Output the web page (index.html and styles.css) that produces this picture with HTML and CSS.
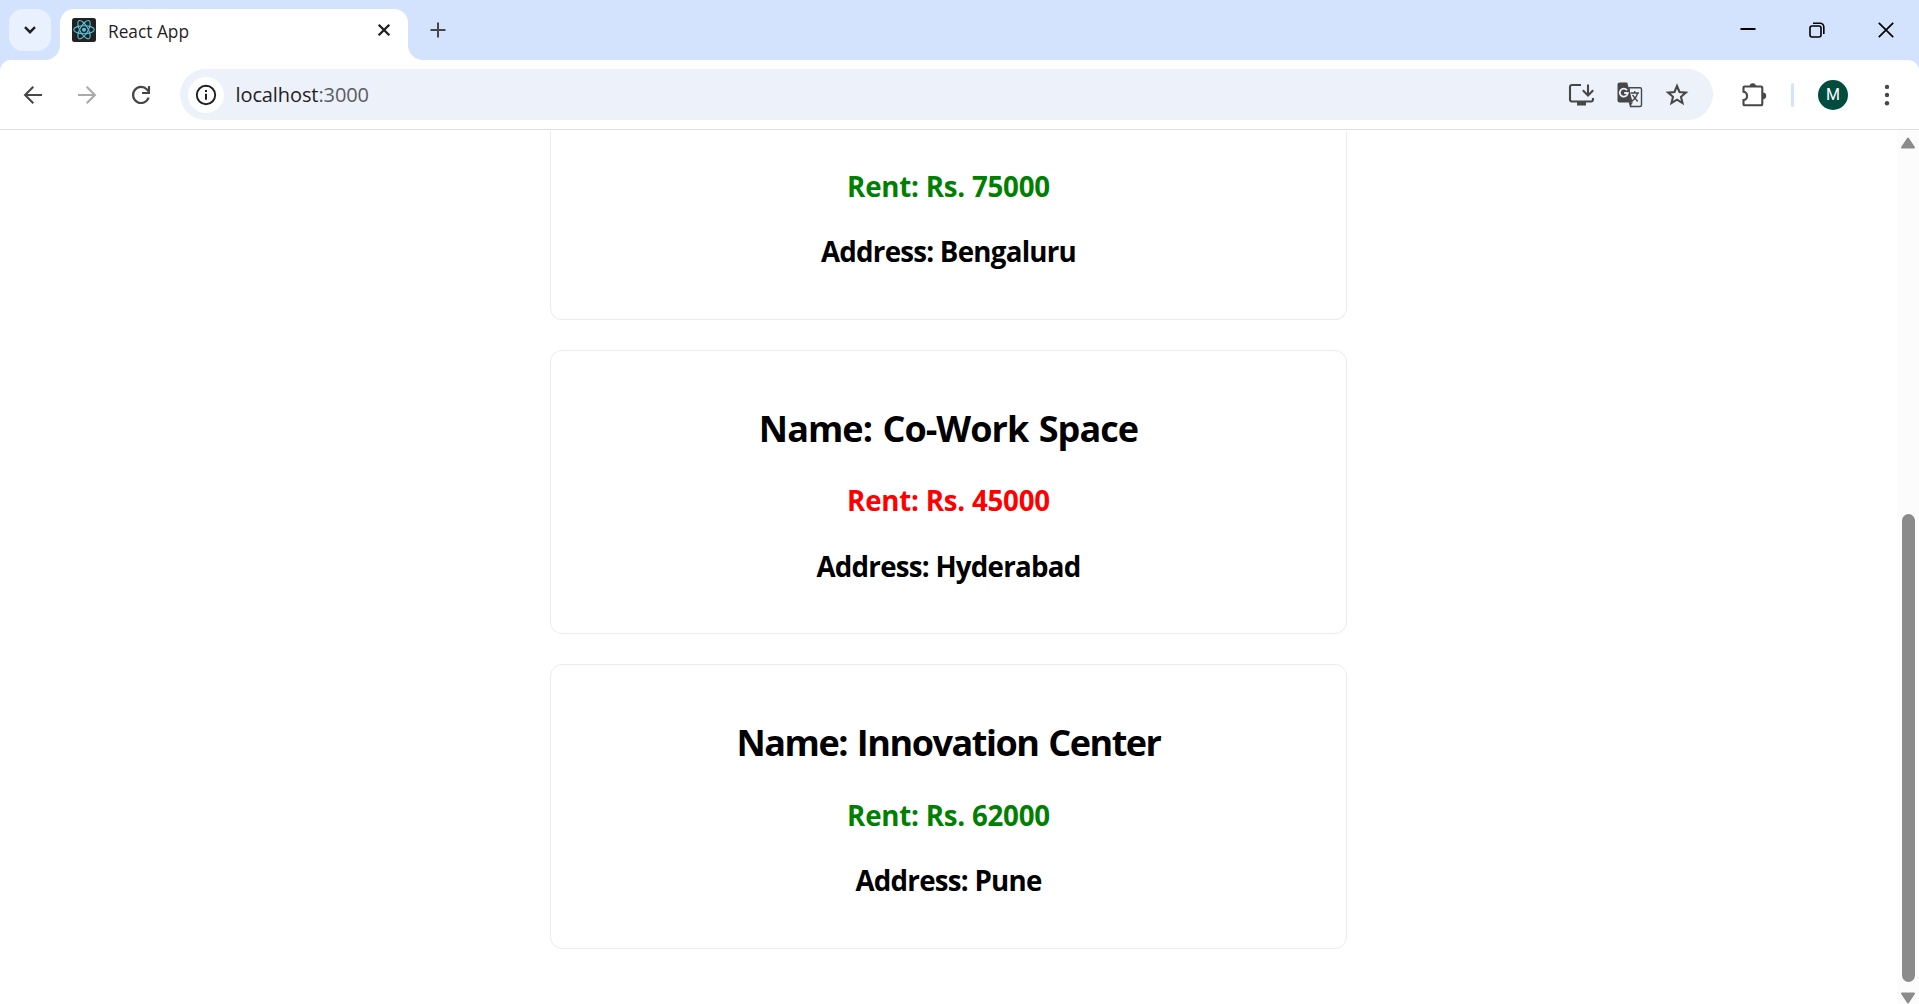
FILE: index.html
```
<!DOCTYPE html>
<html lang="en">
<head>
<meta charset="utf-8">
<title>React App</title>
<link rel="stylesheet" href="styles.css">
</head>
<body>
<div class="browser">
  <header class="tabstrip">
    <button class="tab-search" aria-label="Search tabs">
      <svg width="14" height="10" viewBox="0 0 14 10"><path d="M2 2.2l5 5 5-5" fill="none" stroke="#1f1f1f" stroke-width="2.4"/></svg>
    </button>
    <div class="tab">
      <svg class="favicon" width="24" height="24" viewBox="0 0 24 24">
        <rect width="24" height="24" rx="2.5" fill="#222"/>
        <g fill="none" stroke="#58c4dc" stroke-width="1.1">
          <ellipse cx="12" cy="11.7" rx="10.3" ry="4"/>
          <ellipse cx="12" cy="11.7" rx="10.3" ry="4" transform="rotate(60 12 11.7)"/>
          <ellipse cx="12" cy="11.7" rx="10.3" ry="4" transform="rotate(120 12 11.7)"/>
        </g>
        <circle cx="12" cy="11.7" r="2" fill="#58c4dc"/>
      </svg>
      <span class="tab-title">React App</span>
      <svg class="tab-close" width="14" height="14" viewBox="0 0 14 14"><path d="M1.7 1.7l10.6 10.6M12.3 1.7L1.7 12.3" stroke="#1f1f1f" stroke-width="2.3"/></svg>
    </div>
    <svg class="new-tab" width="16" height="16" viewBox="0 0 16 16"><path d="M8 .5v15M.5 8h15" stroke="#474747" stroke-width="2"/></svg>
    <div class="window-controls">
      <svg width="16" height="16" viewBox="0 0 16 16"><path d="M.5 7h15" stroke="#000" stroke-width="2"/></svg>
      <svg width="16" height="16" viewBox="0 0 16 16" fill="none" stroke="#000" stroke-width="1.6"><rect x="1" y="4" width="11" height="11" rx="2"/><path d="M4 1.2h7.2a3.6 3.6 0 0 1 3.6 3.6V12"/></svg>
      <svg width="16" height="16" viewBox="0 0 16 16"><path d="M.8.8l14.4 14.4M15.2.8L.8 15.2" stroke="#000" stroke-width="1.7"/></svg>
    </div>
  </header>

  <div class="toolbar-back">
    <nav class="toolbar">
      <svg class="nav-icon" width="20" height="20" viewBox="0 0 20 20"><path d="M19 10H2.5M10.3 1.8L2.1 10l8.2 8.2" fill="none" stroke="#474747" stroke-width="2.1"/></svg>
      <svg class="nav-icon" width="20" height="20" viewBox="0 0 20 20"><path d="M1 10h16.500M9.700 1.800l8.200 8.200-8.200 8.200" fill="none" stroke="#a9a9a9" stroke-width="2.1"/></svg>
      <svg class="nav-icon" width="20" height="20" viewBox="0 0 20 20"><path d="M17.600 12.600A8 8 0 1 1 16 4.600l2 2" fill="none" stroke="#474747" stroke-width="2.2"/><path d="M18 1v7h-7" fill="none" stroke="#474747" stroke-width="2.1"/></svg>
      <div class="omnibox">
        <span class="site-info">
          <svg width="22" height="22" viewBox="0 0 22 22"><circle cx="11" cy="11" r="9.2" fill="none" stroke="#1f1f1f" stroke-width="1.9"/><path d="M11 9.800v6M11 6v2.100" stroke="#1f1f1f" stroke-width="2"/></svg>
        </span>
        <span class="url">localhost<span class="port">:3000</span></span>
        <div class="omnibox-actions">
          <svg width="26" height="26" viewBox="0 0 26 26"><path d="M13 3H4a2 2 0 0 0-2 2v12.500a2 2 0 0 0 2 2h19a2 2 0 0 0 2-2V16" fill="none" stroke="#474747" stroke-width="2.100"/><path d="M9 19h9v4.500H9z" fill="#474747"/><path d="M20 2.500V13M14.800 8.200l5.200 5.200 5.200-5.200" fill="none" stroke="#474747" stroke-width="2.100"/></svg>
          <svg width="26" height="26" viewBox="0 0 26 26"><path d="M12 5.700h11a1.500 1.500 0 0 1 1.500 1.500v15.800a1.500 1.500 0 0 1-1.500 1.500h-9.500z" fill="none" stroke="#474747" stroke-width="1.400"/><path d="M2.500.5h7.700l5.500 20H2.500a2 2 0 0 1-2-2v-16a2 2 0 0 1 2-2z" fill="#474747"/><path d="M11.500 20.500h4.300l-2.500 4z" fill="#474747"/><path d="M10 8.200A4 4 0 1 0 10.800 11H7.200" fill="none" stroke="#ecf1fa" stroke-width="1.800"/><path d="M13.500 11h8.500M17.700 9v2M20.500 11c-.7 3.500-2.700 6-5.500 8M15.500 13l5.200 6.500" fill="none" stroke="#474747" stroke-width="1.300"/></svg>
          <svg width="24" height="24" viewBox="0 0 24 24"><path d="M12 3l2.500 6 6.400.6-4.900 4.200 1.500 6.300-5.500-3.400-5.500 3.400L8 13.800 3.100 9.600 9.500 9z" fill="none" stroke="#474747" stroke-width="2.100"/></svg>
        </div>
      </div>
      <svg class="extensions" width="26" height="26" viewBox="0 0 26 26"><path d="M3.500 4.500h16.300a1.500 1.500 0 0 1 1.500 1.500v15.800a1.500 1.500 0 0 1-1.500 1.500H3.500a1 1 0 0 1-1-1v-4.200a4.200 4.200 0 0 0 0-8.300V5.500a1 1 0 0 1 1-1z" fill="none" stroke="#474747" stroke-width="2.100"/><path d="M8.700 4.300a3.100 3.100 0 0 1 6.200 0zM21.800 10.400a3.400 3.400 0 0 1 0 6.800z" fill="#474747"/></svg>
      <span class="divider"></span>
      <span class="avatar">M</span>
      <svg class="menu" width="6" height="22" viewBox="0 0 6 22" fill="#474747"><circle cx="3" cy="2.900" r="2.200"/><circle cx="3" cy="11" r="2.200"/><circle cx="3" cy="19.300" r="2.200"/></svg>
    </nav>
  </div>

  <div class="viewport">
    <main class="offices">
      <section class="card card-cut">
        <h3 class="rent rent-high">Rent: Rs. 75000</h3>
        <h3 class="address">Address: Bengaluru</h3>
      </section>
      <section class="card">
        <h2 class="name">Name: Co-Work Space</h2>
        <h3 class="rent rent-low">Rent: Rs. 45000</h3>
        <h3 class="address">Address: Hyderabad</h3>
      </section>
      <section class="card">
        <h2 class="name name-long">Name: Innovation Center</h2>
        <h3 class="rent rent-high">Rent: Rs. 62000</h3>
        <h3 class="address">Address: Pune</h3>
      </section>
    </main>
    <div class="scrollbar">
      <svg width="16" height="12" viewBox="0 0 16 12"><path d="M8 1.500l6 9H2z" fill="#8b8b8b" stroke="#8b8b8b" stroke-width="2" stroke-linejoin="round"/></svg>
      <div class="thumb"></div>
      <svg width="16" height="12" viewBox="0 0 16 12"><path d="M8 10.500l6-9H2z" fill="#8b8b8b" stroke="#8b8b8b" stroke-width="2" stroke-linejoin="round"/></svg>
    </div>
  </div>
</div>
</body>
</html>
```
FILE: styles.css
```
* { box-sizing: border-box; }

body {
  margin: 0;
  background: #fff;
  font-family: "Open Sans", "Noto Sans", sans-serif;
}

svg { display: block; flex: none; }

.browser {
  display: flex;
  flex-direction: column;
  height: 1004px;
  overflow: hidden;
}

/* Tab strip */
.tabstrip {
  display: flex;
  align-items: flex-start;
  height: 60px;
  padding: 9px 25.5px 0 9px;
  background: #d3e3fd;
}

.tab-search {
  display: flex;
  align-items: center;
  justify-content: center;
  width: 42px;
  height: 42px;
  padding: 0;
  border: 0;
  border-radius: 14px;
  background: #eaf1fe;
}

.tab {
  position: relative;
  display: flex;
  align-items: center;
  width: 348px;
  height: 51px;
  margin-left: 9px;
  padding: 0 17px 9px 12px;
  border-radius: 14px 14px 0 0;
  background: #fff;
}

/* Outward curves at the foot of the active tab */
.tab::before,
.tab::after {
  content: "";
  position: absolute;
  bottom: 0;
  width: 15px;
  height: 15px;
}

.tab::before {
  left: -15px;
  background: radial-gradient(circle at 0 0, transparent 14.5px, #fff 15.5px);
}

.tab::after {
  right: -15px;
  background: radial-gradient(circle at 100% 0, transparent 14.5px, #fff 15.5px);
}

.tab-title {
  flex: 1;
  margin-left: 12px;
  padding-top: 3px;
  color: #1f1f1f;
  font-size: 17.3px;
  line-height: 24px;
}

.new-tab { margin: 13px 0 0 22px; }

.window-controls {
  display: flex;
  gap: 53px;
  margin: 13px 0 0 auto;
}

/* Toolbar */
.toolbar-back { background: #d3e3fd; }

.toolbar {
  display: flex;
  align-items: center;
  height: 70px;
  padding: 0 29px 0 23px;
  border-bottom: 1px solid #dfdfdf;
  border-radius: 11px 11px 0 0;
  background: #fff;
}

.nav-icon { margin-right: 34px; }

.omnibox {
  display: flex;
  align-items: center;
  width: 1533px;
  height: 51px;
  margin-left: -5px;
  padding: 0 24px 0 7.5px;
  border-radius: 26px;
  background: #ecf1fa;
}

.site-info {
  display: flex;
  align-items: center;
  justify-content: center;
  width: 36px;
  height: 36px;
  border-radius: 50%;
  background: #fff;
}

.url {
  margin-left: 12px;
  color: #1f1f1f;
  font-size: 20px;
  line-height: 28px;
  letter-spacing: -0.1px;
}

.port { color: #5a5c5e; }

.omnibox-actions {
  display: flex;
  align-items: center;
  gap: 22.5px;
  margin-left: auto;
}

.extensions { margin-left: 28px; }

.divider {
  width: 3px;
  height: 24px;
  margin-left: 24px;
  border-radius: 2px;
  background: #d3e3fd;
}

.avatar {
  width: 30px;
  height: 30px;
  margin-left: 24px;
  border-radius: 50%;
  background: #004d40;
  color: #fff;
  font: 16px/30px Roboto, sans-serif;
  text-align: center;
}

.menu { margin-left: auto; }

/* Page, scrolled to its end */
.viewport {
  display: flex;
  flex: 1;
  min-height: 0;
  overflow: hidden;
}

.offices {
  display: flex;
  flex: 1;
  flex-direction: column;
  align-items: center;
  justify-content: flex-end;
  gap: 30px;
  padding-bottom: 55px;
}

.card {
  display: flex;
  flex: none;
  flex-direction: column;
  gap: 27.5px;
  width: 797px;
  height: 284.6px;
  padding-top: 53px;
  border: 1px solid #ececec;
  border-radius: 12px;
  text-align: center;
}

/* First visible card, its upper part above the fold */
.card-cut {
  height: 188.8px;
  padding-top: 35.5px;
  border-top: 0;
  border-radius: 0 0 12px 12px;
}

.card h2,
.card h3 {
  margin: 0;
  font-weight: 700;
}

.card .name {
  color: #000;
  font-size: 36px;
  line-height: 50px;
  letter-spacing: -0.95px;
  word-spacing: 2px;
}

.card .name-long { letter-spacing: -1.48px; }

.rent,
.address {
  font-size: 27.7px;
  line-height: 38px;
}

.rent { letter-spacing: -0.23px; }
.rent-high { color: #008000; }
.rent-low { color: #f00; }
.address { color: #000; letter-spacing: -0.75px; }

.scrollbar {
  display: flex;
  flex-direction: column;
  align-items: center;
  width: 22px;
  padding: 7px 1px 0.5px 1px;
  background: #fcfcfc;
}

.thumb {
  width: 13px;
  height: 468px;
  margin: auto 0 10px;
  border-radius: 7px;
  background: #8b8b8b;
}
```
